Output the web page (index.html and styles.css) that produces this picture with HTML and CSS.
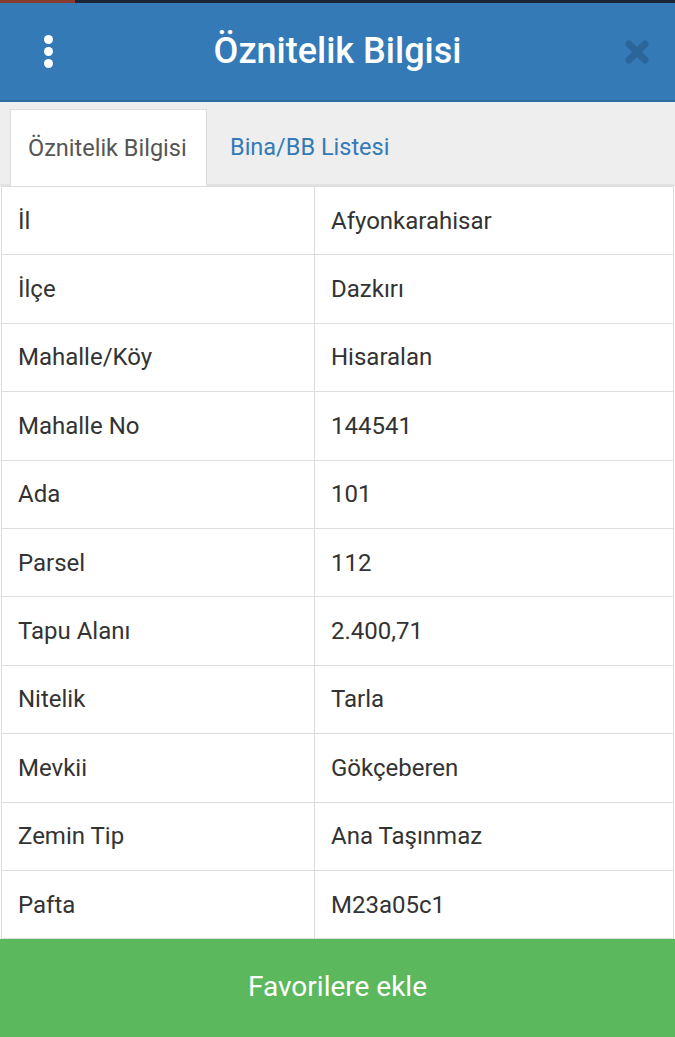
FILE: index.html
```html
<!DOCTYPE html>
<html lang="tr">
<head>
    <meta charset="UTF-8">
    <meta name="viewport" content="width=device-width, initial-scale=1.0">
    <title>Öznitelik Bilgisi</title>
    <link rel="stylesheet" href="styles.css">
</head>
<body>

<div class="status-strip"><span class="strip-left"></span></div>

<div class="header">
    <span class="menu-dots"><i></i><i></i><i></i></span>
    <h1 class="title">Öznitelik Bilgisi</h1>
    <svg class="close-icon" width="28" height="28" viewBox="0 0 28 28">
        <path d="M6 6 L22 22 M22 6 L6 22" stroke="#2b6396" stroke-width="7" stroke-linecap="round"/>
    </svg>
</div>

<div class="tabs">
    <div class="tab active">Öznitelik Bilgisi</div>
    <div class="tab">Bina/BB Listesi</div>
</div>

<table class="info-table">
    <tr><td>İl</td><td>Afyonkarahisar</td></tr>
    <tr><td>İlçe</td><td>Dazkırı</td></tr>
    <tr><td>Mahalle/Köy</td><td>Hisaralan</td></tr>
    <tr><td>Mahalle No</td><td>144541</td></tr>
    <tr><td>Ada</td><td>101</td></tr>
    <tr><td>Parsel</td><td>112</td></tr>
    <tr><td>Tapu Alanı</td><td>2.400,71</td></tr>
    <tr><td>Nitelik</td><td>Tarla</td></tr>
    <tr><td>Mevkii</td><td>Gökçeberen</td></tr>
    <tr><td>Zemin Tip</td><td>Ana Taşınmaz</td></tr>
    <tr><td>Pafta</td><td>M23a05c1</td></tr>
</table>

<button class="fav-button">Favorilere ekle</button>

</body>
</html>
```

FILE: styles.css
```css
body {
    margin: 0;
    font-family: Roboto, "Liberation Sans", sans-serif;
    background-color: #fff;
    color: #333;
    height: 1037px;
    overflow: hidden;
    display: flex;
    flex-direction: column;
}
.status-strip {
    height: 3px;
    background-color: #1b2438;
    display: flex;
}
.strip-left {
    width: 75px;
    background-color: #8a3c2c;
}
.header {
    height: 97px;
    background-color: #337ab7;
    border-bottom: 2px solid #2e6da4;
    display: grid;
    grid-template-columns: 1fr auto 1fr;
    align-items: center;
    padding: 0 24px 0 40px;
}
.menu-dots {
    display: flex;
    flex-direction: column;
    gap: 3px;
    width: 16px;
    align-items: center;
}
.menu-dots i {
    width: 9px;
    height: 9px;
    border-radius: 50%;
    background-color: #fff;
}
.title {
    margin: 0 0 2px -16px;
    color: #fff;
    font-size: 36px;
    font-weight: 500;
}
.close-icon {
    opacity: 0.9;
    justify-self: end;
}
.tabs {
    background-color: #eee;
    padding: 7px 10px 0;
    display: flex;
    height: 75px;
    border-bottom: 2px solid #e2e2e2;
}
.tab {
    display: flex;
    align-items: center;
    padding: 0 22px;
    font-size: 23.5px;
    color: #337ab7;
    border: 1px solid transparent;
    border-bottom: none;
}
.tab.active {
    background-color: #fff;
    color: #555;
    border-color: #ddd;
    padding: 0 17px;
    width: 161px;
    margin-bottom: -2px;
}
.info-table {
    width: calc(100% - 2px);
    margin: 0 1px;
    border-collapse: collapse;
}
.info-table td {
    border: 1px solid #ddd;
    height: 68.4px;
    padding: 0 16px;
    font-size: 24px;
    color: #333;
    box-sizing: border-box;
}
.info-table td:first-child {
    width: 313px;
}
.fav-button {
    flex: 1;
    border: none;
    background-color: #5cb85c;
    color: #fff;
    font-family: Roboto, "Liberation Sans", sans-serif;
    font-size: 28px;
    padding: 0 0 4px;
}
```
